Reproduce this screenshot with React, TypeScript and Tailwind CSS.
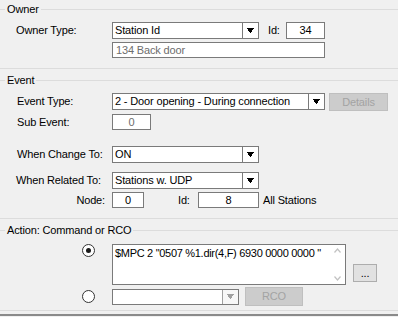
import React from "react";

function GroupHeader({ title }: { title: string }) {
  return (
    <div className="flex items-center h-[12px]">
      <div className="w-[5px] h-px bg-[#dcdcdc]" />
      <span className="px-[2px] whitespace-nowrap">{title}</span>
      <div className="flex-1 h-px bg-[#dcdcdc]" />
    </div>
  );
}

function Arrow({ disabled }: { disabled?: boolean }) {
  return (
    <svg width="7" height="5" viewBox="0 0 7 5" shapeRendering="crispEdges">
      <polygon points="0,0 7,0 4,5 3,5" fill={disabled ? "#a0a0a0" : "#000"} />
    </svg>
  );
}

function Combo({
  value,
  w,
  h = 17,
  disabled,
}: {
  value: string;
  w: string;
  h?: number;
  disabled?: boolean;
}) {
  return (
    <div
      className={`${w} flex border border-[#7a7a7a] bg-white shrink-0`}
      style={{ height: h }}
    >
      <div className="flex-1 flex items-center pl-[2px] whitespace-nowrap overflow-hidden">{value}</div>
      <div
        className={`w-[16px] flex items-center justify-center border-l ${
          disabled ? "border-[#a0a0a0] bg-[#f7f7f7]" : "border-[#7a7a7a] bg-white"
        }`}
      >
        <Arrow disabled={disabled} />
      </div>
    </div>
  );
}

function Box({
  value,
  w,
  h = 16,
  gray,
  left,
}: {
  value: string;
  w: string;
  h?: number;
  gray?: boolean;
  left?: boolean;
}) {
  return (
    <div
      className={`${w} flex items-center border border-[#7a7a7a] bg-white shrink-0 ${
        left ? "justify-start pl-[3px]" : "justify-center"
      } ${gray ? "text-[#6d6d6d]" : "text-black"}`}
      style={{ height: h }}
    >
      {value}
    </div>
  );
}

function Radio({ checked }: { checked?: boolean }) {
  return (
    <div className="w-[13px] h-[13px] rounded-full border border-[#333333] bg-white flex items-center justify-center shrink-0">
      {checked && <div className="w-[5px] h-[5px] rounded-full bg-[#1a1a1a]" />}
    </div>
  );
}

export default function App() {
  return (
    <div className="w-[398px] h-[317px] bg-[#f0f0f0] overflow-hidden font-['Liberation_Sans',Arial,sans-serif] text-[11px] leading-none tracking-[-0.15px] text-black select-none">
      {/* Owner */}
      <div className="pt-[3px] pb-[10px] border-b border-[#dcdcdc]">
        <GroupHeader title="Owner" />
        <div className="mt-[7px] h-[17px] flex items-center">
          <div className="w-[112px] pl-[16px]">Owner Type:</div>
          <Combo value="Station Id" w="w-[147px]" />
          <div className="ml-[9px] w-[18px]">Id:</div>
          <Box value="34" w="w-[39px]" h={17} />
        </div>
        <div className="mt-[3px] h-[16px] flex items-center">
          <div className="w-[112px]" />
          <Box value="134 Back door" w="w-[213px]" gray left />
        </div>
      </div>

      {/* Event */}
      <div className="mt-[5px] pb-[10px] border-b border-[#dcdcdc]">
        <GroupHeader title="Event" />
        <div className="mt-[7px] h-[18px] flex items-start">
          <div className="w-[112px] pl-[17px] h-[17px] flex items-center">Event Type:</div>
          <Combo value="2 - Door opening - During connection" w="w-[213px]" />
          <div className="ml-[4px] w-[59px] h-[18px] flex items-center justify-center bg-[#cccccc] border border-[#bfbfbf] text-[#a3a3a3]">
            Details
          </div>
        </div>
        <div className="mt-[3px] h-[16px] flex items-center">
          <div className="w-[112px] pl-[17px]">Sub Event:</div>
          <Box value="0" w="w-[39px]" gray />
        </div>
        <div className="mt-[16px] h-[17px] flex items-center">
          <div className="w-[112px] pl-[17px] whitespace-nowrap">When Change To:</div>
          <Combo value="ON" w="w-[147px]" />
        </div>
        <div className="mt-[9px] h-[17px] flex items-center">
          <div className="w-[112px] pl-[16px] whitespace-nowrap">When Related To:</div>
          <Combo value="Stations w. UDP" w="w-[147px]" />
        </div>
        <div className="mt-[3px] h-[16px] flex items-center">
          <div className="w-[112px] pr-[7px] text-right">Node:</div>
          <Box value="0" w="w-[32px]" />
          <div className="ml-[34px] w-[20px]">Id:</div>
          <Box value="8" w="w-[61px]" />
          <div className="ml-[4px] whitespace-nowrap">All Stations</div>
        </div>
      </div>

      {/* Action */}
      <div className="mt-[5px] pb-[4px] border-b border-[#dcdcdc]">
        <GroupHeader title="Action: Command or RCO" />
        <div className="mt-[8px] h-[41px] flex items-start">
          <div className="ml-[82px] mt-[0px]">
            <Radio checked />
          </div>
          <div className="ml-[17px] w-[234px] h-[41px] border border-[#7a7a7a] bg-white flex">
            <div className="flex-1 pl-[2px] pt-[3px] whitespace-nowrap overflow-hidden text-[11px] tracking-[-0.3px]">
              $MPC 2 "0507 %1.dir(4,F) 6930 0000 0000 "
            </div>
            <div className="w-[16px] flex flex-col justify-between items-center py-[3px]">
              <svg width="7" height="5" viewBox="0 0 7 5">
                <polyline points="0.5,4.5 3.5,1 6.5,4.5" fill="none" stroke="#c2c2c2" strokeWidth="1.2" />
              </svg>
              <svg width="7" height="5" viewBox="0 0 7 5">
                <polyline points="0.5,0.5 3.5,4 6.5,0.5" fill="none" stroke="#c2c2c2" strokeWidth="1.2" />
              </svg>
            </div>
          </div>
          <div className="ml-[7px] mt-[20px] w-[24px] h-[18px] flex items-center justify-center bg-[#e1e1e1] border border-[#adadad]">
            ...
          </div>
        </div>
        <div className="mt-[2px] h-[19px] flex items-center">
          <div className="ml-[82px]">
            <Radio />
          </div>
          <div className="ml-[17px]">
            <Combo value="" w="w-[127px]" h={16} disabled />
          </div>
          <div className="ml-[6px] w-[58px] h-[19px] flex items-center justify-center bg-[#cccccc] border border-[#bfbfbf] text-[#a3a3a3]">
            RCO
          </div>
        </div>
      </div>
      <div className="mt-[3px] h-[2px] bg-[#8a8a8a]" />
    </div>
  );
}
